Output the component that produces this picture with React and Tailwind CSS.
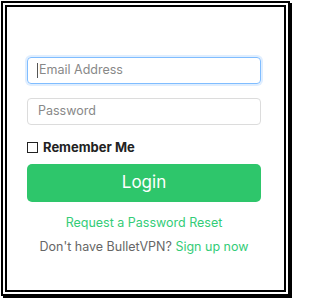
export default function App() {
  return (
    <div className="w-[293px] h-[300px] bg-white p-px" style={{ fontFamily: 'Inter, "Open Sans", sans-serif' }}>
      <div className="w-[289px] h-[295px] border-[6px] border-double border-black shadow-[2px_2px_0_0_#000] bg-white px-[20px] pt-[50px]">
        <div className="w-[234px]">
          <div className="h-[27px] rounded-[4px] border border-[#80bdff] shadow-[0_0_0_2px_rgba(128,189,255,0.25)] flex items-center pl-[9px] text-[12.5px] text-[#888]">
            <span className="w-px h-[15px] bg-[#555] mr-px"></span>Email Address
          </div>
          <div className="mt-[14px] h-[27px] rounded-[4px] border border-[#dcdcdc] flex items-center pl-[10px] text-[12.5px] text-[#888]">
            Password
          </div>
          <label className="mt-[13px] flex items-center gap-[5px]">
            <span className="w-[11px] h-[11px] border border-[#222]"></span>
            <span className="text-[13px] font-bold text-[#222]">Remember Me</span>
          </label>
          <button className="mt-[6px] w-full h-[38px] rounded-[5px] bg-[#2ec66b] text-white text-[17px]">
            Login
          </button>
          <p className="mt-[12px] text-center text-[12.5px] text-[#33cc77]">Request a Password Reset</p>
          <p className="mt-[6px] text-center text-[12.5px] text-[#666]">
            Don't have BulletVPN? <span className="text-[#33cc77]">Sign up now</span>
          </p>
        </div>
      </div>
    </div>
  );
}
